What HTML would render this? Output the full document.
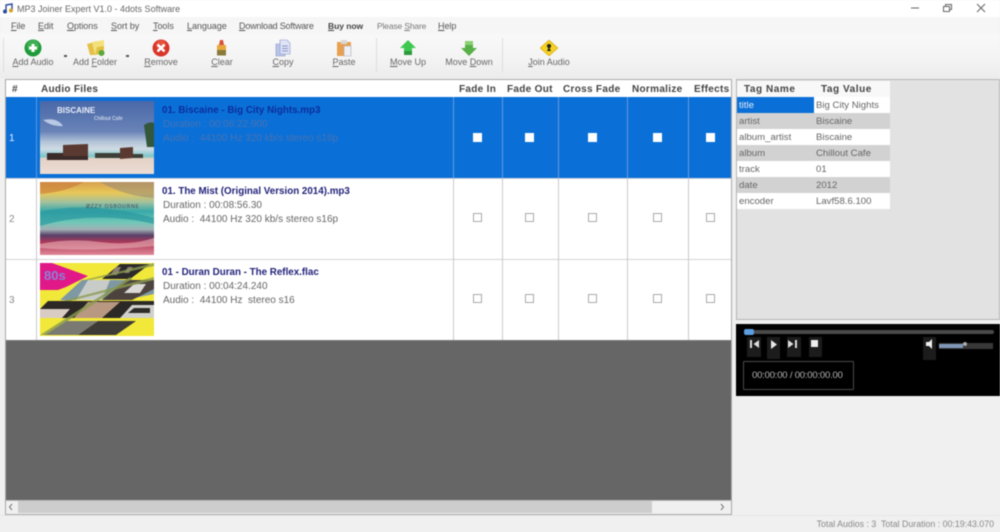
<!DOCTYPE html>
<html><head><meta charset="utf-8"><style>
html,body{margin:0;padding:0}
body{width:1000px;height:532px;overflow:hidden;background:#f0f0f0;position:relative;font-family:"Liberation Sans",sans-serif;font-size:9px;color:#555}
#w{position:absolute;left:0;top:0;width:1000px;height:532px;filter:blur(.5px)}
.a,.t{position:absolute}
.t{white-space:nowrap}
u{text-decoration:underline}
.m{top:20px;font-size:9px;color:#555;line-height:12px;letter-spacing:-.05px}
.b{top:56px;font-size:9px;color:#666;line-height:12px;transform:translateX(-50%)}
.h{top:83px;font-size:10px;font-weight:bold;color:#444;line-height:14px;letter-spacing:.3px}
.l{position:absolute;width:1px;background:#c8c8d0}
.f{font-size:9.8px;line-height:12px;color:#22227a;font-weight:bold}
.d{font-size:10px;line-height:12px;color:#666}
.c{position:absolute;width:9px;height:9px;box-sizing:border-box;border:1px solid #aaa;background:#fff}
.w{position:absolute;width:9px;height:9px;background:#fff}
.tr{position:absolute;left:737px;width:153px;height:16px;font-size:9.6px;line-height:18px;color:#666}
.tr span{position:absolute;left:79px}
.tr b{position:absolute;left:2px;font-weight:normal}
.g{background:#d2d2d2}.wh{background:#fff}
</style></head><body><div id="w">

<!-- title bar -->
<div class="a" style="left:0;top:0;width:1000px;height:17px;background:#fff"></div>
<svg class="a" style="left:2px;top:2px" width="13" height="13" viewBox="0 0 13 13"><path d="M4 9V3l6-1v6" fill="none" stroke="#2a4a9a" stroke-width="1.4"/><circle cx="3" cy="9.500" r="2" fill="#2a4a9a"/><circle cx="9" cy="8.500" r="2" fill="#d8a020"/></svg>
<div class="t" style="left:17px;top:3px;font-size:9px;line-height:12px;color:#666">MP3 Joiner Expert V1.0 - 4dots Software</div>
<svg class="a" style="left:905px;top:0" width="95" height="17" viewBox="0 0 95 17"><path d="M6 8h8" stroke="#666"/><path d="M38.500 6.500h6v5h-6zM40.500 6.500v-2h6v5h-2" fill="none" stroke="#666"/><path d="M72 4l8 8M80 4l-8 8" stroke="#666"/></svg>

<!-- menu -->
<div class="a" style="left:0;top:17px;width:1000px;height:17px;background:#f6f6f6"></div>
<div class="t m" style="left:11px"><u>F</u>ile</div>
<div class="t m" style="left:38px"><u>E</u>dit</div>
<div class="t m" style="left:67px"><u>O</u>ptions</div>
<div class="t m" style="left:111px"><u>S</u>ort by</div>
<div class="t m" style="left:153px"><u>T</u>ools</div>
<div class="t m" style="left:187px"><u>L</u>anguage</div>
<div class="t m" style="left:239px;letter-spacing:-.2px"><u>D</u>ownload Software</div>
<div class="t m" style="left:328px;font-weight:bold;color:#444;font-size:8.500px"><u>B</u>uy now</div>
<div class="t m" style="left:377px;color:#777;font-size:8.500px;letter-spacing:-.15px">Please <u>S</u>hare</div>
<div class="t m" style="left:438px"><u>H</u>elp</div>

<!-- toolbar -->
<div class="a" style="left:0;top:34px;width:1000px;height:44px;background:linear-gradient(#f9f9f9,#f3f3f3 60%,#ececec)"></div>
<div class="a" style="left:3px;top:38px;width:1px;height:34px;background:#ddd"></div>
<div class="a" style="left:376px;top:38px;width:1px;height:34px;background:#ddd"></div>
<div class="a" style="left:502px;top:38px;width:1px;height:34px;background:#ddd"></div>

<svg class="a" style="left:24px;top:39px" width="18" height="18" viewBox="0 0 18 18"><circle cx="9" cy="9" r="8.500" fill="#1f9a3a"/><circle cx="9" cy="7" r="6" fill="#55c060" opacity=".6"/><path d="M9 5v8M5 9h8" stroke="#fff" stroke-width="3"/></svg>
<div class="t b" style="left:33px"><u>A</u>dd Audio</div>
<div class="a" style="left:64px;top:55px;width:3px;height:2px;background:#555"></div>

<svg class="a" style="left:87px;top:39px" width="18" height="18" viewBox="0 0 18 18"><path d="M0 5l8-2v13H3z" fill="#e4c04a"/><path d="M5 3l12-2v13l-9 2z" fill="#f4e07a"/><path d="M8 16l2-8 7-1v7z" fill="#e0c044"/><circle cx="14.500" cy="14" r="3" fill="#5aa83c"/></svg>
<div class="t b" style="left:95px">Add <u>F</u>older</div>
<div class="a" style="left:126px;top:55px;width:3px;height:2px;background:#555"></div>

<svg class="a" style="left:152px;top:39px" width="18" height="18" viewBox="0 0 18 18"><circle cx="9" cy="9" r="8.500" fill="#d8352a"/><circle cx="9" cy="6" r="5" fill="#f07050" opacity=".5"/><path d="M5.500 5.500l7 7M12.500 5.500l-7 7" stroke="#fff" stroke-width="2.600"/></svg>
<div class="t b" style="left:161px"><u>R</u>emove</div>

<svg class="a" style="left:214px;top:39px" width="15" height="18" viewBox="0 0 15 18"><path d="M6 1h3l1 5H5z" fill="#d8503a"/><path d="M3 6h9v5H3z" fill="#e8a83c"/><path d="M3 11h9v5.500H3z" fill="#8a7a3c"/></svg>
<div class="t b" style="left:222px"><u>C</u>lear</div>

<svg class="a" style="left:274px;top:39px" width="18" height="18" viewBox="0 0 18 18"><path d="M2 5h9v12H2z" fill="#b8c4e8" stroke="#8896c4" stroke-width=".6"/><path d="M6 1h7l3 3v11H6z" fill="#dfe4f6" stroke="#8896c4" stroke-width=".6"/><path d="M8 7h6M8 9.500h6M8 12h6" stroke="#8896c4"/></svg>
<div class="t b" style="left:283px"><u>C</u>opy</div>

<svg class="a" style="left:336px;top:39px" width="16" height="18" viewBox="0 0 16 18"><path d="M1 3h14v14H1z" fill="#e8a050"/><path d="M5 1h6v4H5z" fill="#d8d8d8"/><path d="M8 7h7v10H8z" fill="#eef0f4" stroke="#aab" stroke-width=".6"/></svg>
<div class="t b" style="left:344px"><u>P</u>aste</div>

<svg class="a" style="left:400px;top:40px" width="16" height="16" viewBox="0 0 16 16"><path d="M8 0l8 8h-4v7H4V8H0z" fill="#3ec850"/><path d="M4 11h8v4H4z" fill="#2a9a3c"/></svg>
<div class="t b" style="left:408px"><u>M</u>ove Up</div>

<svg class="a" style="left:461px;top:40px" width="16" height="16" viewBox="0 0 16 16"><path d="M8 16l8-8h-4V1H4v7H0z" fill="#58b048"/><path d="M4 1h8v4H4z" fill="#88d070"/></svg>
<div class="t b" style="left:469px">Move <u>D</u>own</div>

<svg class="a" style="left:540px;top:40px" width="18" height="16" viewBox="0 0 18 16"><path d="M9 0l9 8-9 8-9-8z" fill="#f4d020" stroke="#d8a820" stroke-width=".6"/><circle cx="9" cy="6" r="2" fill="#222"/><path d="M7 11l2-4 2 4z" fill="#222"/></svg>
<div class="t b" style="left:549px"><u>J</u>oin Audio</div>

<!-- main list frame -->
<div class="a" style="left:5px;top:79px;width:727px;height:436px;background:#666;box-shadow:inset 0 0 0 1px #a8a8a8"></div>
<div class="a" style="left:6px;top:80px;width:725px;height:17px;background:#fff"></div>
<div class="a" style="left:6px;top:97px;width:725px;height:81px;background:#0a70d8"></div>
<div class="a" style="left:6px;top:179px;width:725px;height:80px;background:#fff"></div>
<div class="a" style="left:6px;top:260px;width:725px;height:80px;background:#fff"></div>
<div class="a" style="left:6px;top:178px;width:725px;height:1px;background:#d4d4d8"></div>
<div class="a" style="left:6px;top:259px;width:725px;height:1px;background:#d4d4d8"></div>
<div class="a" style="left:6px;top:340px;width:725px;height:1px;background:#777"></div>

<div class="t h" style="left:12px">#</div>
<div class="t h" style="left:41px">Audio Files</div>
<div class="t h" style="left:459px">Fade In</div>
<div class="t h" style="left:507px">Fade Out</div>
<div class="t h" style="left:563px">Cross Fade</div>
<div class="t h" style="left:632px">Normalize</div>
<div class="t h" style="left:694px">Effects</div>

<div class="l" style="left:36px;top:97px;height:243px"></div>
<div class="l" style="left:453px;top:97px;height:243px"></div>
<div class="l" style="left:502px;top:97px;height:243px"></div>
<div class="l" style="left:558px;top:97px;height:243px"></div>
<div class="l" style="left:627px;top:97px;height:243px"></div>
<div class="l" style="left:688px;top:97px;height:243px"></div>
<div class="a" style="left:36px;top:97px;width:1px;height:81px;background:#5a96dc"></div>
<div class="a" style="left:453px;top:97px;width:1px;height:81px;background:#6a9ad8"></div>
<div class="a" style="left:502px;top:97px;width:1px;height:81px;background:#6a9ad8"></div>
<div class="a" style="left:558px;top:97px;width:1px;height:81px;background:#6a9ad8"></div>
<div class="a" style="left:627px;top:97px;width:1px;height:81px;background:#6a9ad8"></div>
<div class="a" style="left:688px;top:97px;width:1px;height:81px;background:#6a9ad8"></div>

<!-- row numbers -->
<div class="t d" style="left:9px;top:133px;color:#e8f0ff">1</div>
<div class="t d" style="left:9px;top:214px;color:#888">2</div>
<div class="t d" style="left:9px;top:295px;color:#888">3</div>

<!-- thumb 1 -->
<svg class="a" style="left:40px;top:101px" width="114" height="73" viewBox="0 0 114 73">
<defs><linearGradient id="s1" x1="0" y1="0" x2="0" y2="1"><stop offset="0" stop-color="#4a68a8"/><stop offset=".42" stop-color="#6a84b8"/><stop offset=".56" stop-color="#b4c4d8"/><stop offset=".66" stop-color="#d0dce4"/><stop offset=".76" stop-color="#7cc4c8"/><stop offset=".79" stop-color="#e4d2c6"/><stop offset="1" stop-color="#ecdcd4"/></linearGradient></defs>
<rect width="114" height="73" fill="url(#s1)"/>
<path d="M3 19q14-3 20 6-11 1-20-6" fill="#d0dcf0" opacity=".8"/>
<path d="M104 24q6-4 10-2v24h-7z" fill="#34563a"/>
<path d="M23 44l25-1v13l-25 1z" fill="#5a3a30"/>
<path d="M7 52l16 0v7H7zM23 55h25v4H23z" fill="#3a2a28"/>
<path d="M80 47l13-1v11l-13 1z" fill="#5a3a30"/>
<path d="M55 52h25v5H55zM93 53h10v4H93z" fill="#3c4038"/>
<text x="17" y="12" font-family="Liberation Sans" font-size="8" font-weight="bold" fill="#e8eef8">BISCAINE</text>
<text x="54" y="19" font-family="Liberation Sans" font-size="5" fill="#e8eef8">Chillout Cafe</text>
</svg>

<!-- thumb 2 -->
<svg class="a" style="left:40px;top:182px" width="114" height="73" viewBox="0 0 114 73">
<defs><linearGradient id="s2" x1="0" y1="0" x2="0" y2="1"><stop offset="0" stop-color="#d8a050"/><stop offset=".15" stop-color="#e8c858"/><stop offset=".28" stop-color="#a0c0a0"/><stop offset=".4" stop-color="#38a8a8"/><stop offset=".55" stop-color="#70c8b8"/><stop offset=".65" stop-color="#a0b0b4"/><stop offset=".73" stop-color="#584068"/><stop offset=".83" stop-color="#b03858"/><stop offset="1" stop-color="#e08898"/></linearGradient></defs>
<rect width="114" height="73" fill="url(#s2)"/>
<path d="M0 0h44q-18 10-44 12z" fill="#c87838" opacity=".6"/>
<path d="M60 0h54v16q-30-2-54-16z" fill="#988878" opacity=".55"/>
<path d="M0 30q50-12 114 6v6q-60-14-114 2z" fill="#2a98a0" opacity=".7"/>
<path d="M0 62q30-6 60-2t54-4v8q-60 6-114 2z" fill="#e8b0b8" opacity=".6"/>
<text x="46" y="26" font-family="Liberation Sans" font-size="5" letter-spacing=".8" fill="#445">ØZZY OSBOURNE</text>
</svg>

<!-- thumb 3 -->
<svg class="a" style="left:40px;top:263px" width="114" height="73" viewBox="0 0 114 73">
<rect width="114" height="73" fill="#f2e83a"/>
<path d="M0 0h12l36 13-22 11-8 3H0z" fill="#e01888"/>
<!-- top band -->
<path d="M62 16l18-15h30L90 16z" fill="#2c2a28"/>
<path d="M70 12l6-8h5l-4 8zM84 10l4-6h5l-4 6z" fill="#8a8074"/>
<!-- second band -->
<path d="M20 37l22-20h72v14l-30 6z" fill="#7e98a4"/>
<path d="M36 37l12-20h22l-8 20z" fill="#c8ccc8"/>
<path d="M62 37l24-20h28v9l-22 11z" fill="#4c423e"/>
<path d="M84 30l10-9h12l-6 9z" fill="#dcdad6"/>
<!-- third band -->
<path d="M0 46l8-8h106v17H0z" fill="#2c2826"/>
<path d="M0 46h30l-8 9H0z" fill="#d8ccc4"/>
<path d="M34 55l14-16h32L62 55z" fill="#b89880"/>
<path d="M80 55l12-13h22v13z" fill="#d0d0cc"/>
<path d="M88 50h22v-5H94z" fill="#2e2c2a"/>
<!-- fourth band -->
<path d="M4 72l22-14h32L38 72z" fill="#7a7a72"/>
<path d="M38 72l20-14h38L76 72z" fill="#3e3a36"/>
<!-- diagonal lines -->
<path d="M44 17L114 0v3L50 17zM22 38l92-24v3L30 38zM0 72L90 14l2 2L6 72z" fill="#8a9a50" opacity=".8"/>
<text x="4" y="17" font-family="Liberation Sans" font-size="13" font-weight="bold" fill="#8a82d8">80s</text>
</svg>

<!-- row text -->
<div class="t f" style="left:162px;top:105px;color:#0c2e9c">01. Biscaine - Big City Nights.mp3</div>
<div class="t d" style="left:163px;top:119px;color:#4a72b0">Duration : 00:06:22.900</div>
<div class="t d" style="left:163px;top:133px;color:#4a72b0">Audio :&nbsp; 44100 Hz 320 kb/s stereo s16p</div>

<div class="t f" style="left:162px;top:186px">01. The Mist (Original Version 2014).mp3</div>
<div class="t d" style="left:163px;top:200px">Duration : 00:08:56.30</div>
<div class="t d" style="left:163px;top:214px">Audio :&nbsp; 44100 Hz 320 kb/s stereo s16p</div>

<div class="t f" style="left:162px;top:267px">01 - Duran Duran - The Reflex.flac</div>
<div class="t d" style="left:163px;top:281px">Duration : 00:04:24.240</div>
<div class="t d" style="left:163px;top:295px">Audio :&nbsp; 44100 Hz&nbsp; stereo s16</div>

<!-- checkboxes -->
<div class="w" style="left:473px;top:133px"></div><div class="w" style="left:525px;top:133px"></div><div class="w" style="left:588px;top:133px"></div><div class="w" style="left:653px;top:133px"></div><div class="w" style="left:706px;top:133px"></div>
<div class="c" style="left:473px;top:213px"></div><div class="c" style="left:525px;top:213px"></div><div class="c" style="left:588px;top:213px"></div><div class="c" style="left:653px;top:213px"></div><div class="c" style="left:706px;top:213px"></div>
<div class="c" style="left:473px;top:294px"></div><div class="c" style="left:525px;top:294px"></div><div class="c" style="left:588px;top:294px"></div><div class="c" style="left:653px;top:294px"></div><div class="c" style="left:706px;top:294px"></div>

<!-- h scrollbar -->
<div class="a" style="left:6px;top:500px;width:725px;height:14px;background:#f0f0f0;border-top:1px solid #bbb;box-sizing:border-box"></div>
<div class="a" style="left:18px;top:501px;width:634px;height:12px;background:#cdcdcd"></div>
<svg class="a" style="left:8px;top:503px" width="720" height="8" viewBox="0 0 720 8"><path d="M4 1L1.500 4 4 7M713 1l2.500 3L713 7" fill="none" stroke="#777"/></svg>

<!-- tag panel -->
<div class="a" style="left:736px;top:79px;width:264px;height:241px;background:#e2e2e2;border:1px solid #b4b4b4;box-sizing:border-box"></div>
<div class="a" style="left:737px;top:81px;width:153px;height:16px;background:#f8f8f8"></div>
<div class="t" style="left:744px;top:83px;font-size:10px;line-height:14px;font-weight:bold;color:#444;letter-spacing:.55px">Tag Name</div>
<div class="t" style="left:821px;top:83px;font-size:10px;line-height:14px;font-weight:bold;color:#444;letter-spacing:.55px">Tag Value</div>
<div class="tr wh" style="top:97px"><span>Big City Nights</span></div>
<div class="a" style="left:737px;top:97px;width:77px;height:16px;background:#0a70d8"></div>
<div class="t" style="left:739px;top:97px;font-size:9.6px;line-height:18px;color:#e4ecfa">title</div>
<div class="tr g" style="top:113px"><b>artist</b><span>Biscaine</span></div>
<div class="tr wh" style="top:129px"><b>album_artist</b><span>Biscaine</span></div>
<div class="tr g" style="top:145px"><b>album</b><span>Chillout Cafe</span></div>
<div class="tr wh" style="top:161px"><b>track</b><span>01</span></div>
<div class="tr g" style="top:177px"><b>date</b><span>2012</span></div>
<div class="tr wh" style="top:193px"><b>encoder</b><span>Lavf58.6.100</span></div>

<!-- player -->
<div class="a" style="left:736px;top:324px;width:264px;height:72px;background:#000"></div>
<div class="a" style="left:744px;top:330px;width:250px;height:4px;background:#4a4a4a;border-radius:2px"></div>
<div class="a" style="left:744px;top:329px;width:10px;height:6px;background:#5c9ee0;border-radius:2px"></div>
<div class="a" style="left:747px;top:337px;width:14px;height:20px;background:#1c1c1c"></div>
<div class="a" style="left:767px;top:337px;width:13px;height:22px;background:#1c1c1c"></div>
<div class="a" style="left:787px;top:337px;width:14px;height:20px;background:#1c1c1c"></div>
<div class="a" style="left:809px;top:337px;width:13px;height:20px;background:#1c1c1c"></div>
<div class="a" style="left:923px;top:337px;width:13px;height:23px;background:#1c1c1c"></div>
<svg class="a" style="left:747px;top:337px" width="190" height="16" viewBox="0 0 190 16"><path d="M3 3h2v8H3zM12 3L6.500 7 12 11z" fill="#ddd"/><path d="M24 3l6 4.500-6 4.500z" fill="#e8e8e8"/><path d="M41 3l5.500 4L41 11zM48 3h2v8h-2z" fill="#ddd"/><rect x="64" y="3" width="7" height="7" fill="#eee"/><path d="M179 5h3l3-3v10l-3-3h-3z" fill="#f0f0f0"/></svg>
<div class="a" style="left:939px;top:343px;width:54px;height:6px;background:#383838"></div>
<div class="a" style="left:939px;top:344px;width:24px;height:4px;background:#8098b8"></div>
<div class="a" style="left:963px;top:342px;width:4px;height:4px;background:#aaa;border-radius:2px"></div>
<div class="a" style="left:743px;top:361px;width:111px;height:29px;border:1px solid #4a4a4a;box-sizing:border-box;border-radius:1px"></div>
<div class="t" style="left:752px;top:369px;font-size:9.5px;line-height:13px;color:#b4b4b4;letter-spacing:-.2px">00:00:00 / 00:00:00.00</div>

<!-- status -->
<div class="a" style="left:0;top:515px;width:1000px;height:1px;background:#e8e8e8"></div>
<div class="t" style="right:6px;top:518px;font-size:8.800px;line-height:12px;color:#888">Total Audios : 3&nbsp; Total Duration : 00:19:43.070</div>

</div></body></html>
